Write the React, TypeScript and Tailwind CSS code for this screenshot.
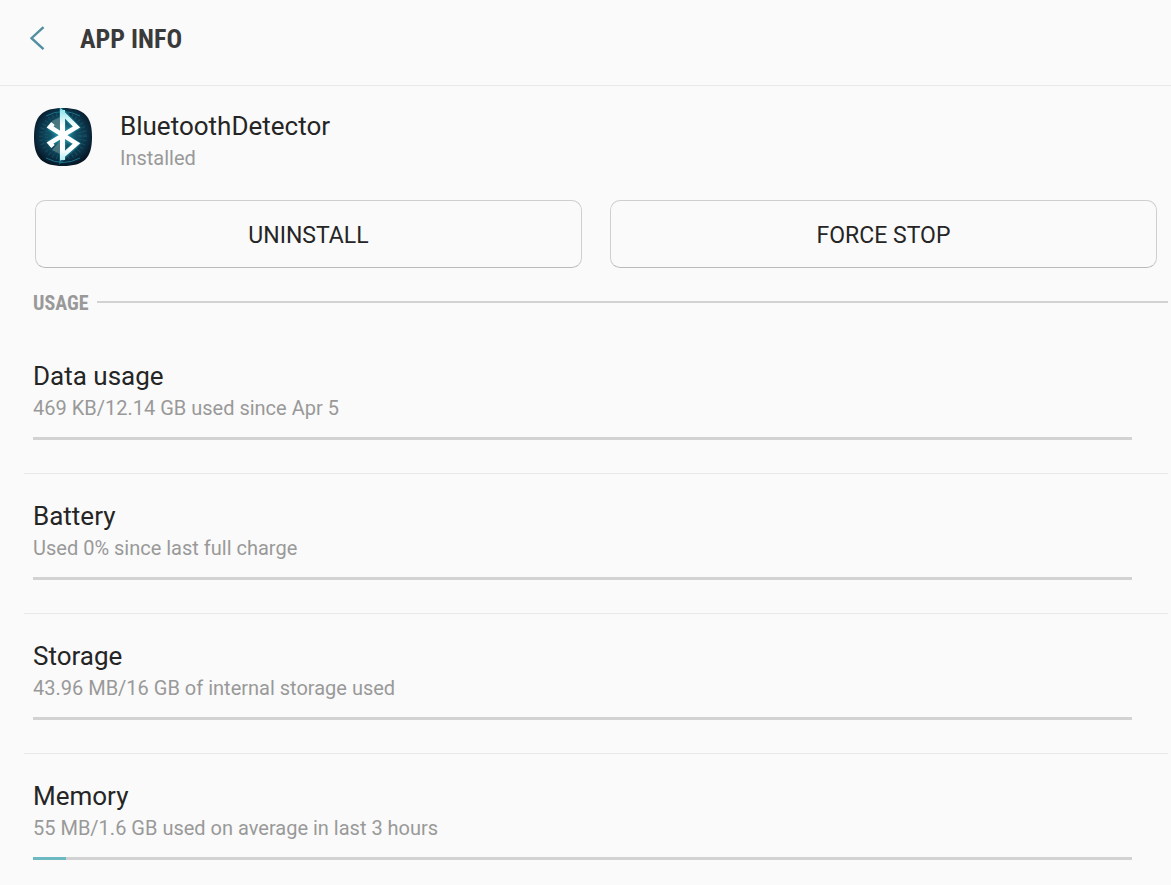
type Usage = { id: string; title: string; detail: string; percent: number };

const usages: Usage[] = [
  { id: "data", title: "Data usage", detail: "469 KB/12.14 GB used since Apr 5", percent: 0 },
  { id: "battery", title: "Battery", detail: "Used 0% since last full charge", percent: 0 },
  { id: "storage", title: "Storage", detail: "43.96 MB/16 GB of internal storage used", percent: 0 },
  { id: "memory", title: "Memory", detail: "55 MB/1.6 GB used on average in last 3 hours", percent: 3 },
];

function AppIcon() {
  return (
    <svg viewBox="0 0 58 58" className="size-[58px] shrink-0" aria-hidden="true">
      <defs>
        <radialGradient id="glow" cx="50%" cy="46%" r="56%">
          <stop offset="0" stopColor="#2d9fb4" />
          <stop offset="0.4" stopColor="#125266" />
          <stop offset="0.8" stopColor="#0a2c40" />
          <stop offset="1" stopColor="#061522" />
        </radialGradient>
        <linearGradient id="shade" gradientUnits="userSpaceOnUse" x1="0" y1="2" x2="0" y2="54">
          <stop offset="0" stopColor="#8fe3ea" />
          <stop offset="0.3" stopColor="#ffffff" />
          <stop offset="0.75" stopColor="#ffffff" />
          <stop offset="1" stopColor="#a5eaf1" />
        </linearGradient>
      </defs>
      <path d="M29 0C50 0 58 8 58 29S50 58 29 58 0 50 0 29 8 0 29 0Z" fill="url(#glow)" />
      <g fill="none" stroke="#3792a5">
        <circle cx="29" cy="28" r="22" strokeWidth="4" strokeDasharray="1 3" opacity="0.25" />
        <circle cx="29" cy="28" r="17" strokeWidth="4" strokeDasharray="1 2" opacity="0.2" />
        <path d="M12 8Q29 -1 46 8M12 50Q29 59 46 50" stroke="#1c6f8a" strokeWidth="1" />
      </g>
      <path d="M15 19 42 36 28.5 49V5L42 19 15 36" fill="none" stroke="#1ea8bd" strokeWidth="7" opacity="0.35" />
      <path d="M18 13 26 9V22L19 18ZM18 42 26 46V33Z" fill="#587f86" opacity="0.8" />
      <path
        d="M19 15.5 16 19 42.5 35.5 28.5 48V5L42.5 19 16 35 19 38.5"
        fill="none"
        stroke="url(#shade)"
        strokeWidth="4.5"
        strokeLinejoin="miter"
      />
      <path d="M26 2H31V52H26Z" fill="url(#shade)" />
    </svg>
  );
}

function UsageRow({ id, title, detail, percent }: Usage) {
  return (
    <li className="border-b border-[#e8e8e8] pt-[26px] pr-9 pb-[33px] pl-[9px] last:border-b-0">
      <h3 id={id} className="text-[26px] leading-8 text-[#252525]">{title}</h3>
      <p className="text-xl leading-8 text-[#999999]">{detail}</p>
      <div
        role="progressbar"
        aria-labelledby={id}
        aria-valuenow={percent}
        className="mt-[13px] h-[3px] bg-[#d2d2d2]"
      >
        <div className="h-full bg-[#6cb9c1]" style={{ width: `${percent}%` }} />
      </div>
    </li>
  );
}

const actionClass =
  "h-[68px] flex-1 rounded-[10px] border border-[#cfcfcf] border-b-[#bababa] pt-1 text-[23px] leading-8 text-[#252525]";

export default function App() {
  return (
    <div className="min-h-screen bg-[#fafafa] font-['Roboto',sans-serif]">
      <header className="flex h-[86px] items-center border-b border-[#e8e8e8] pb-2 pl-[30px]">
        <button type="button" aria-label="Back" className="mr-[34px]">
          <svg viewBox="0 0 16 26" className="h-[26px] w-4" fill="none" stroke="#538fa2" strokeWidth="2.5">
            <path d="M13.5 1.2 1.5 12.2 13.5 23.2" />
          </svg>
        </button>
        <h1 className="font-['Roboto_Condensed','Roboto',sans-serif] text-[26px] leading-8 font-bold text-[#3a3a3a]">
          APP INFO
        </h1>
      </header>
      <main className="h-[calc(100vh-86px)] overflow-hidden">
        <section className="flex items-start gap-7 pt-[22px] pl-[34px]">
          <AppIcon />
          <div className="pt-0.5">
            <h2 className="text-[26px] leading-8 text-[#252525]">BluetoothDetector</h2>
            <p className="text-xl leading-8 text-[#999999]">Installed</p>
          </div>
        </section>
        <div className="flex gap-7 pt-[26px] pr-3.5 pl-[35px]">
          <button type="button" className={actionClass}>UNINSTALL</button>
          <button type="button" className={actionClass}>FORCE STOP</button>
        </div>
        <section>
          <div className="flex h-[66px] items-start gap-[9px] pt-[19px] pr-[3px] pl-[33px]">
            <h2 className="font-['Roboto_Condensed','Roboto',sans-serif] text-xl leading-8 font-bold text-[#999999]">
              USAGE
            </h2>
            <div className="mt-3.5 h-0.5 flex-1 bg-[#d2d2d2]" />
          </div>
          <ul className="pr-[3px] pl-6">
            {usages.map((usage) => (
              <UsageRow key={usage.id} {...usage} />
            ))}
          </ul>
        </section>
      </main>
    </div>
  );
}
